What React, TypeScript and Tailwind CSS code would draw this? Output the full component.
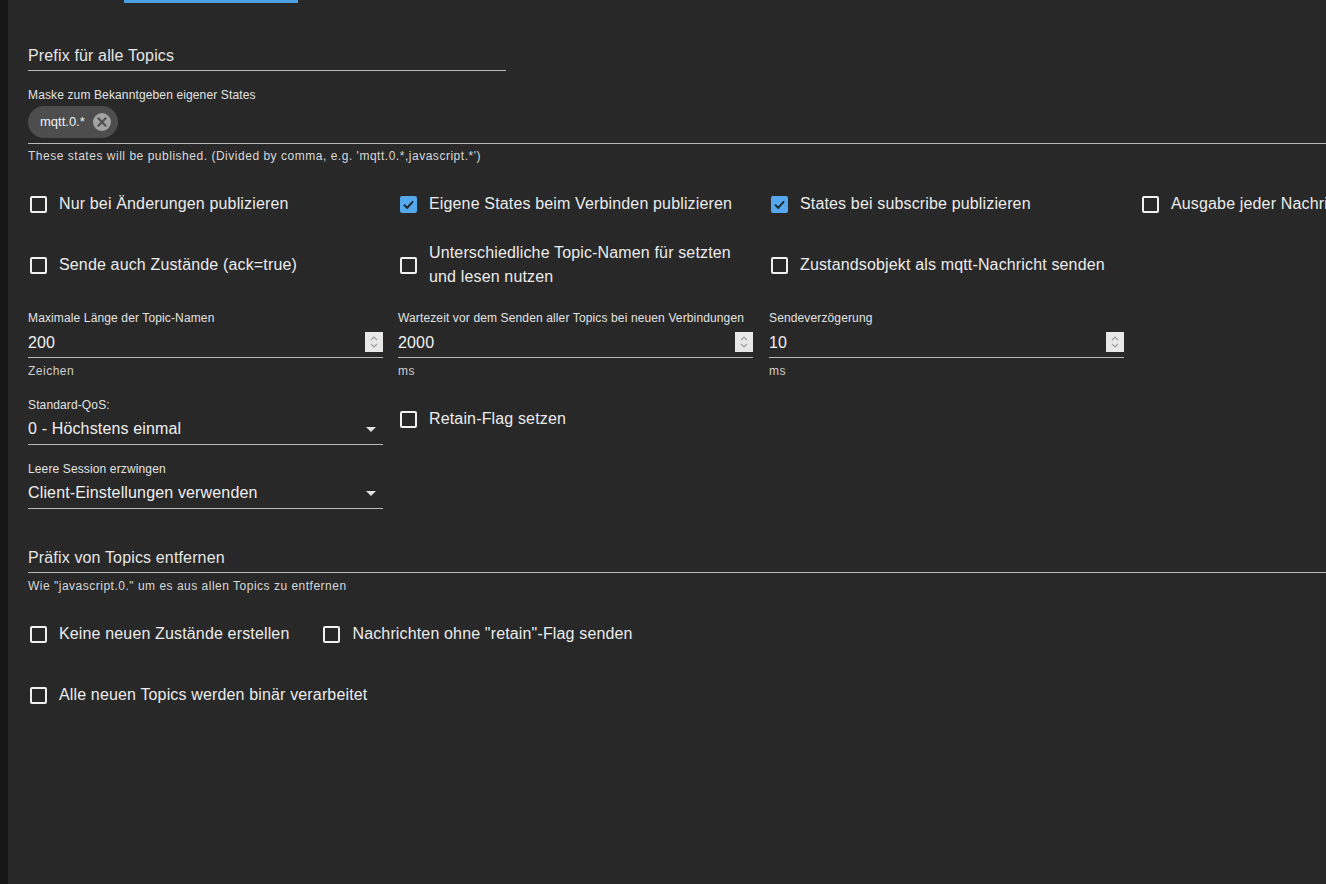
import React from "react"

const font = "font-[family-name:'Liberation_Sans',Arial,sans-serif]"

function Check({ label, checked = false, className = "" }: { label: React.ReactNode; checked?: boolean; className?: string }) {
    return (
        <div className={`flex items-center ${className}`}>
            <span
                className={`ml-[2px] w-[17px] h-[17px] rounded-[2px] shrink-0 flex items-center justify-center ${
                    checked ? "bg-[#55a8ee]" : "border-2 border-[#f0f0f0]"
                }`}
            >
                {checked && (
                    <svg width="13" height="13" viewBox="0 0 13 13">
                        <polyline points="2,6.8 5.2,9.8 11,3.4" fill="none" stroke="#1d2730" strokeWidth="2" />
                    </svg>
                )}
            </span>
            <span className="ml-[12px] text-[16px] leading-[24px] tracking-[0.15px] text-[#ececec]">{label}</span>
        </div>
    )
}

function Spinner() {
    return (
        <span className="w-[18px] h-[20px] bg-[#e8e8e8] flex flex-col items-center justify-center gap-[2px] shrink-0">
            <svg width="8" height="5" viewBox="0 0 8 5">
                <polyline points="1,4.2 4,1.2 7,4.2" fill="none" stroke="#9a9a9a" strokeWidth="1.2" />
            </svg>
            <svg width="8" height="5" viewBox="0 0 8 5">
                <polyline points="1,0.8 4,3.8 7,0.8" fill="none" stroke="#9a9a9a" strokeWidth="1.2" />
            </svg>
        </span>
    )
}

function NumberField({ label, value, unit }: { label: string; value: string; unit: string }) {
    return (
        <div className="w-[355px]">
            <div className="text-[12px] leading-[14px] tracking-[0.13px] text-[#e2e2e2] whitespace-nowrap">{label}</div>
            <div className="mt-[8px] flex items-start justify-between pb-[5px] border-b border-[#b8b8b8]">
                <span className="text-[16px] leading-[19px] tracking-[0.15px] text-[#f2f2f2]">{value}</span>
                <span className="-mt-[1px]">
                    <Spinner />
                </span>
            </div>
            <div className="mt-[6px] text-[12px] leading-[14px] tracking-[0.5px] text-[#cfcfcf]">{unit}</div>
        </div>
    )
}

function SelectField({ label, value, className = "" }: { label: string; value: string; className?: string }) {
    return (
        <div className={`w-[355px] ${className}`}>
            <div className="text-[12px] leading-[14px] tracking-[0.13px] text-[#e2e2e2]">{label}</div>
            <div className="mt-[7px] flex items-center justify-between pb-[6px] border-b border-[#b8b8b8]">
                <span className="text-[16px] leading-[19px] tracking-[0.15px] text-[#f0f0f0]">{value}</span>
                <svg width="10" height="5" viewBox="0 0 10 5" className="mr-[7px] mt-[2px]">
                    <polygon points="0,0 10,0 5,5" fill="#e0e0e0" />
                </svg>
            </div>
        </div>
    )
}

export default function App() {
    return (
        <div className={`w-[1326px] h-[884px] flex overflow-hidden bg-[#282828] ${font}`}>
            <div className="w-[8px] shrink-0 bg-[#171717]" />
            <div className="flex-1 min-w-0">
                <div className="h-[3px] flex">
                    <div className="ml-[116px] w-[174px] bg-[#4c9fe0]" />
                </div>

                <div className="pl-[20px]">
                    {/* Prefix */}
                    <div className="mt-[43px] w-[478px] pb-[5px] border-b border-[#b8b8b8]">
                        <span className="text-[16px] leading-[19px] tracking-[0.15px] text-[#e6e6e6] block">Prefix für alle Topics</span>
                    </div>

                    {/* Mask */}
                    <div className="mt-[17px] text-[12px] leading-[14px] tracking-[0.13px] text-[#e2e2e2]">Maske zum Bekanntgeben eigener States</div>
                    <div className="mt-[4px] pb-[5px] border-b border-[#b8b8b8]">
                        <div className="inline-flex items-center h-[32px] rounded-full bg-[#4d4d4d] pl-[12px] pr-[6px]">
                            <span className="text-[13px] text-[#f0f0f0]">mqtt.0.*</span>
                            <svg width="20" height="20" viewBox="0 0 20 20" className="ml-[7px]">
                                <circle cx="10" cy="10" r="9" fill="#a3a3a3" />
                                <path d="M6.3 6.3 L13.7 13.7 M13.7 6.3 L6.3 13.7" stroke="#4d4d4d" strokeWidth="2" strokeLinecap="round" />
                            </svg>
                        </div>
                    </div>
                    <div className="mt-[5px] text-[12px] leading-[14px] tracking-[0.52px] text-[#d8d8d8] whitespace-nowrap">
                        These states will be published. (Divided by comma, e.g. 'mqtt.0.*,javascript.*')
                    </div>

                    {/* Checkboxes */}
                    <div className="mt-[20px] grid grid-cols-[370px_371px_371px_371px] grid-rows-[42px_48px] gap-y-[16px] items-center">
                        <Check label="Nur bei Änderungen publizieren" />
                        <Check label="Eigene States beim Verbinden publizieren" checked />
                        <Check label="States bei subscribe publizieren" checked />
                        <Check label={<span className="whitespace-nowrap">Ausgabe jeder Nachricht</span>} />
                        <Check label="Sende auch Zustände (ack=true)" />
                        <Check label={<>Unterschiedliche Topic-Namen für setzten<br />und lesen nutzen</>} />
                        <Check label="Zustandsobjekt als mqtt-Nachricht senden" />
                    </div>

                    {/* Number fields */}
                    <div className="mt-[22px] grid grid-cols-[370px_371px_371px]">
                        <NumberField label="Maximale Länge der Topic-Namen" value="200" unit="Zeichen" />
                        <NumberField label="Wartezeit vor dem Senden aller Topics bei neuen Verbindungen" value="2000" unit="ms" />
                        <NumberField label="Sendeverzögerung" value="10" unit="ms" />
                    </div>

                    {/* QoS / Retain / Session */}
                    <div className="mt-[20px] grid grid-cols-[370px_371px] items-start">
                        <div>
                            <SelectField label="Standard-QoS:" value="0 - Höchstens einmal" />
                            <SelectField label="Leere Session erzwingen" value="Client-Einstellungen verwenden" className="mt-[17px]" />
                        </div>
                        <Check label="Retain-Flag setzen" className="h-[42px]" />
                    </div>

                    {/* Remove prefix */}
                    <div className="mt-[39px] pb-[5px] border-b border-[#b8b8b8]">
                        <span className="text-[16px] leading-[19px] tracking-[0.15px] text-[#e6e6e6] block">Präfix von Topics entfernen</span>
                    </div>
                    <div className="mt-[6px] text-[12px] leading-[14px] tracking-[0.5px] text-[#d8d8d8]">
                        Wie "javascript.0." um es aus allen Topics zu entfernen
                    </div>

                    <div className="mt-[20px] flex items-center h-[42px]">
                        <Check label="Keine neuen Zustände erstellen" className="h-[42px]" />
                        <Check label={'Nachrichten ohne "retain"-Flag senden'} className="h-[42px] ml-[32px]" />
                    </div>
                    <Check label="Alle neuen Topics werden binär verarbeitet" className="mt-[19px] h-[42px]" />
                </div>
            </div>
        </div>
    )
}
